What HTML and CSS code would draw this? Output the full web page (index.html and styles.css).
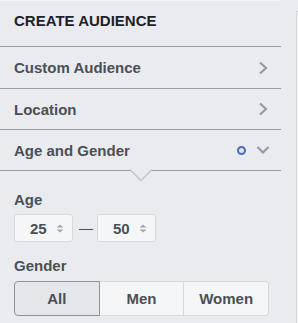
FILE: index.html
```html
<!DOCTYPE html>
<html lang="en">
<head>
    <meta charset="UTF-8">
    <title>Create Audience</title>
    <link rel="stylesheet" href="styles.css">
</head>
<body>
    <div class="sidebar">
        <div class="panel-title">CREATE AUDIENCE</div>
        <div class="row row-first">
            <span>Custom Audience</span>
            <svg class="chev" width="10" height="14" viewBox="0 0 10 14"><path d="M2 1.5 L8 7 L2 12.5" fill="none" stroke="#959aa1" stroke-width="2.2"/></svg>
        </div>
        <div class="row">
            <span>Location</span>
            <svg class="chev" width="10" height="14" viewBox="0 0 10 14"><path d="M2 1.5 L8 7 L2 12.5" fill="none" stroke="#959aa1" stroke-width="2.2"/></svg>
        </div>
        <div class="row row-open">
            <span>Age and Gender</span>
            <span class="dot"></span>
            <svg class="chev-down" width="14" height="10" viewBox="0 0 14 10"><path d="M1.5 2 L7 7.5 L12.5 2" fill="none" stroke="#959aa1" stroke-width="2.2"/></svg>
            <svg class="notch" width="24" height="13" viewBox="0 0 24 13"><path d="M1 0.5 L12 11.5 L23 0.5" fill="#e9ebee" stroke="#c4c7cc" stroke-width="1.5"/></svg>
        </div>
        <div class="section">
            <div class="label">Age</div>
            <div class="age-range">
                <div class="age-box">
                    <span>25</span>
                    <svg width="8" height="9" viewBox="0 0 8 9"><path d="M4 0.5 L7.5 3.5 L0.5 3.5 Z M4 8.5 L7.5 5.5 L0.5 5.5 Z" fill="#a2a6ac"/></svg>
                </div>
                <span class="dash">&mdash;</span>
                <div class="age-box">
                    <span>50</span>
                    <svg width="8" height="9" viewBox="0 0 8 9"><path d="M4 0.5 L7.5 3.5 L0.5 3.5 Z M4 8.5 L7.5 5.5 L0.5 5.5 Z" fill="#a2a6ac"/></svg>
                </div>
            </div>
            <div class="label label-gender">Gender</div>
            <div class="segments">
                <button class="seg seg-active">All</button>
                <button class="seg">Men</button>
                <button class="seg">Women</button>
            </div>
        </div>
    </div>
    <div class="side-area">
        <div class="side-card"></div>
    </div>
</body>
</html>
```

FILE: styles.css
```css
body {
    margin: 0;
    display: flex;
    height: 323px;
    background-color: #e9ebee;
    font-family: "Liberation Sans", Arial, sans-serif;
    color: #4b4f56;
    overflow: hidden;
}
.sidebar {
    width: 281px;
    flex-shrink: 0;
    background-color: #eaebee;
}
.panel-title {
    height: 47px;
    box-sizing: border-box;
    padding: 0 0 6px 14px;
    display: flex;
    align-items: center;
    font-size: 15px;
    font-weight: bold;
    color: #1d2129;
    border-top: 1px solid #f2f3f5;
    border-bottom: 1px solid #999ca1;
}
.row {
    position: relative;
    height: 41px;
    box-sizing: border-box;
    padding: 0 13px 0 14px;
    display: flex;
    align-items: center;
    font-size: 15px;
    font-weight: bold;
    border-bottom: 1px solid #999ca1;
}
.row-first {
    height: 42px;
}
.row span:first-child {
    flex: 1;
}
.row-open {
    padding-right: 11px;
}
.dot {
    width: 5px;
    height: 5px;
    border: 2px solid #4a6cb3;
    border-radius: 50%;
    background-color: #dfe3ee;
    margin-right: 10px;
}
.notch {
    position: absolute;
    left: 129px;
    bottom: -12px;
}
.section {
    padding: 20px 14px 0;
}
.label {
    font-size: 15px;
    font-weight: bold;
    line-height: 18px;
    margin-bottom: 5px;
}
.label-gender {
    margin-top: 15px;
    margin-bottom: 6px;
}
.age-range {
    display: flex;
    align-items: center;
}
.age-box {
    width: 59px;
    height: 28px;
    box-sizing: border-box;
    border: 1px solid #d6d9dd;
    border-radius: 3px;
    background-color: #f5f6f7;
    display: flex;
    align-items: center;
    padding-left: 15px;
    font-size: 15px;
    font-weight: bold;
}
.age-box svg {
    margin-left: 9px;
}
.dash {
    margin: 0 4px 0 6px;
    font-size: 14px;
    color: #4b4f56;
}
.segments {
    display: flex;
    width: 255px;
    height: 35px;
}
.seg {
    flex: 1;
    margin: 0;
    padding: 0;
    font-family: "Liberation Sans", Arial, sans-serif;
    font-size: 15px;
    font-weight: bold;
    color: #4b4f56;
    background-color: #f5f6f7;
    border: 1px solid #d6d9dd;
    border-left: none;
}
.seg:last-child {
    border-radius: 0 4px 4px 0;
}
.seg-active {
    background-color: #e4e6ea;
    border: 1px solid #8f949b;
    border-radius: 4px 0 0 4px;
}
.side-area {
    flex: 1;
    padding-top: 11px;
    padding-left: 15px;
}
.side-card {
    height: 100%;
    border-left: 1px solid #d3d6db;
    border-top: 1px solid #d3d6db;
    background-color: #f5f6f7;
}
```
